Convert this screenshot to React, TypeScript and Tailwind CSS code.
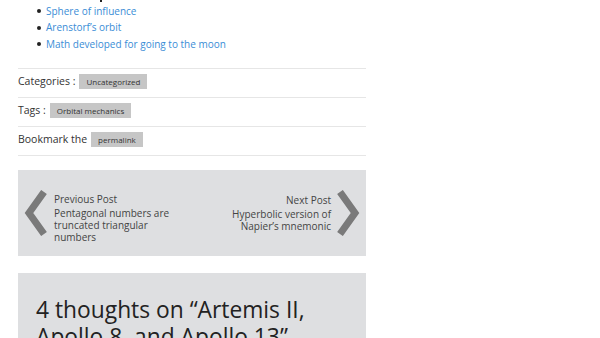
import React from 'react';

const links = ['Sphere of influence', 'Arenstorf’s orbit', 'Math developed for going to the moon'];

function Chevron({ dir }: { dir: 'left' | 'right' }) {
  const pts = dir === 'left' ? '20,2 5,23 20,44' : '6,2 21,23 6,44';
  return (
    <svg width="26" height="46" viewBox="0 0 26 46" className="shrink-0">
      <polyline points={pts} fill="none" stroke="#7a7a7a" strokeWidth="7" strokeLinejoin="miter" strokeMiterlimit="10" />
    </svg>
  );
}

function MetaRow({ label, tag }: { label: string; tag: string }) {
  return (
    <div className="flex items-center gap-[4px] h-[29px] border-b border-[#e6e6e6] pb-[2px]">
      <span className="text-[10.5px] text-[#333]">{label}</span>
      <span className="bg-[#c6c6c6] text-[#333] text-[8px] px-[7px] h-[15px] leading-[15px]">{tag}</span>
    </div>
  );
}

export default function App() {
  return (
    <div className="w-[600px] h-[338px] overflow-hidden bg-white" style={{ fontFamily: '"Open Sans", "Noto Sans", sans-serif' }}>
      <div className="ml-[18px] w-[348px]">
        <div className="h-[3px] relative">
          <span className="absolute left-[82px] -top-[1px] w-[2px] h-[3px] bg-[#222]" />
        </div>
        <ul className="pl-[28px] pt-[0px] pb-[15px]">
          {links.map(l => (
            <li key={l} className="flex items-center h-[16.5px] text-[10px] text-[#3a8dd6]">
              <span className="w-[4px] h-[4px] rounded-full bg-[#222] mr-[5px] -ml-[9px]" />
              {l}
            </li>
          ))}
        </ul>
        <div className="border-t border-[#e6e6e6]">
          <MetaRow label="Categories :" tag="Uncategorized" />
          <MetaRow label="Tags :" tag="Orbital mechanics" />
          <MetaRow label="Bookmark the" tag="permalink" />
        </div>
        <div className="mt-[14px] h-[86px] bg-[#dedfe1] flex items-center justify-between pl-[6px] pr-[6px] text-[#444]">
          <div className="flex items-center gap-[4px]">
            <Chevron dir="left" />
            <div className="w-[130px] text-[10px] leading-[12px] pt-[11px]">
              <div className="mb-[2px]">Previous Post</div>
              <div>Pentagonal numbers are truncated triangular numbers</div>
            </div>
          </div>
          <div className="flex items-center gap-[3px]">
            <div className="text-right text-[10px] leading-[12px] pt-[1px]">
              <div className="mb-[2px]">Next Post</div>
              <div>Hyperbolic version of</div>
              <div>Napier’s mnemonic</div>
            </div>
            <Chevron dir="right" />
          </div>
        </div>
        <div className="mt-[17px] h-[80px] bg-[#dedfe1] px-[18px] pt-[23px]">
          <h2 className="text-[22.8px] leading-[27px] text-[#222]">4 thoughts on “Artemis II, Apollo 8, and Apollo 13”</h2>
        </div>
      </div>
    </div>
  );
}
